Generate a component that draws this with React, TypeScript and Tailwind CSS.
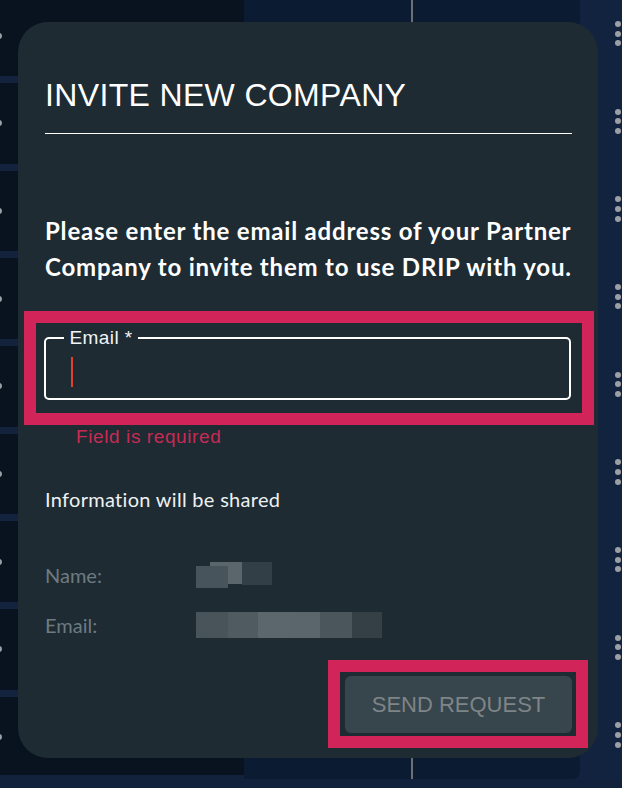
import React from 'react';

const rows = Array.from({ length: 9 }, (_, i) => i);

function LeftRows() {
  return (
    <div className="w-[244px] h-[780px] bg-[#08131f] flex flex-col -mt-[4.7px] overflow-hidden">
      {rows.map((r) => (
        <div key={r} className="h-[87.7px] shrink-0 border-b-[7px] border-[#13233d] flex items-center">
          <span className="block w-[6px] h-[6px] -ml-[4px] rounded-full bg-[#9aa0a6]" />
        </div>
      ))}
    </div>
  );
}

function RightDots() {
  return (
    <div className="flex-1 flex flex-col gap-[62.3px] pt-[21px] pl-[34.7px]">
      {rows.map((r) => (
        <div key={r} className="flex flex-col gap-[3.7px]">
          <span className="block w-[6px] h-[6px] rounded-full bg-[#9aa0a6]" />
          <span className="block w-[6px] h-[6px] rounded-full bg-[#9aa0a6]" />
          <span className="block w-[6px] h-[6px] rounded-full bg-[#9aa0a6]" />
        </div>
      ))}
    </div>
  );
}

function Redacted({ blocks, w, h }: { blocks: { x: number; y: number; w: number; h: number; c: string }[]; w: number; h: number }) {
  return (
    <svg width={w} height={h} viewBox={`0 0 ${w} ${h}`} className="block shrink-0">
      {blocks.map((b, i) => (
        <rect key={i} x={b.x} y={b.y} width={b.w} height={b.h} fill={b.c} />
      ))}
    </svg>
  );
}

const nameBlocks = [
  { x: 14, y: 0, w: 32, h: 22, c: '#5a666c' },
  { x: 46, y: 0, w: 30, h: 23, c: '#333f46' },
  { x: 0, y: 4, w: 32, h: 22, c: '#48545b' },
];

const emailBlocks = [
  { x: 0, y: 0, w: 32, h: 26, c: '#48535a' },
  { x: 32, y: 0, w: 30, h: 26, c: '#4f5b61' },
  { x: 62, y: 0, w: 32, h: 26, c: '#5b676d' },
  { x: 94, y: 0, w: 30, h: 26, c: '#5a666c' },
  { x: 124, y: 0, w: 32, h: 26, c: '#4a565c' },
  { x: 156, y: 0, w: 30, h: 26, c: '#343f46' },
];

export default function App() {
  return (
    <div className="relative w-[622px] h-[788px] overflow-hidden bg-[#12223c]">
      {/* dashboard behind the dialog */}
      <div className="flex h-[780px]">
        <LeftRows />
        <div className="w-[336px] h-[779px] bg-[#0b1b31] rounded-br-[8px] pl-[166.5px]">
          <div className="w-[2.5px] h-full bg-[#6c7075]" />
        </div>
        <div className="flex-1 h-[780px] bg-[#12233f] flex">
          <RightDots />
        </div>
      </div>

      {/* dialog */}
      <div className="absolute left-[18px] top-[22px] w-[580px] h-[736px] rounded-[30px] bg-[#1e2b33] pl-[27px] pr-[26px] pt-[53px] flex flex-col">
        <h2 className="text-[32px] leading-[40px] tracking-[0.35px] text-white font-normal" style={{ fontFamily: '"Liberation Sans", Arial, sans-serif' }}>
          INVITE NEW COMPANY
        </h2>
        <div className="mt-[18px] h-px bg-white" />

        <p className="mt-[79px] text-[24px] leading-[36px] tracking-[0.8px] font-bold text-white whitespace-nowrap" style={{ fontFamily: 'Lato, sans-serif' }}>
          Please enter the email address of your Partner
          <br />
          Company to invite them to use DRIP with you.
        </p>

        <div className="mt-[26px] -ml-[21px] w-[570px] border-[12px] border-[#d12459] pt-[5px] pb-[13px] pl-[8px]" style={{ fontFamily: '"Liberation Sans", Arial, sans-serif' }}>
          <fieldset className="w-[527px] h-[72px] border-2 border-white rounded-[5px] px-[17.5px]">
            <legend className="px-[6px] text-[19px] leading-[20px] text-[#f2f4f5] tracking-[0.4px]">Email *</legend>
            <div className="ml-[7px] mt-[9px] w-[2px] h-[30px] bg-[#e5402f]" />
          </fieldset>
        </div>
        <p className="ml-[31px] text-[19px] leading-[24px] tracking-[0.6px] text-[#c82a55]" style={{ fontFamily: '"Liberation Sans", Arial, sans-serif' }}>
          Field is required
        </p>

        <div style={{ fontFamily: 'Lato, sans-serif' }}>
          <p className="mt-[38px] text-[20px] leading-[24px] tracking-[0.3px] text-[#eef1f2]">Information will be shared</p>
          <div className="mt-[52px] h-[24px] flex items-center text-[20px] leading-[24px] text-[#6d7b82]">
            <span className="w-[151px] shrink-0">Name:</span>
            <Redacted blocks={nameBlocks} w={76} h={26} />
          </div>
          <div className="mt-[26px] h-[24px] flex items-center text-[20px] leading-[24px] text-[#6d7b82]">
            <span className="w-[151px] shrink-0">Email:</span>
            <Redacted blocks={emailBlocks} w={186} h={26} />
          </div>
        </div>

        <div className="mt-[23px] self-end -mr-[16px] w-[260px] border-[12px] border-[#d12459] pl-[5px] pr-[4px] pt-[4px] pb-[3px]">
          <button className="w-[227px] h-[57px] rounded-[6px] bg-[#37454c] text-[22px] leading-[57px] text-[#7f8487]" style={{ fontFamily: '"Liberation Sans", Arial, sans-serif' }}>
            SEND REQUEST
          </button>
        </div>
      </div>
    </div>
  );
}
